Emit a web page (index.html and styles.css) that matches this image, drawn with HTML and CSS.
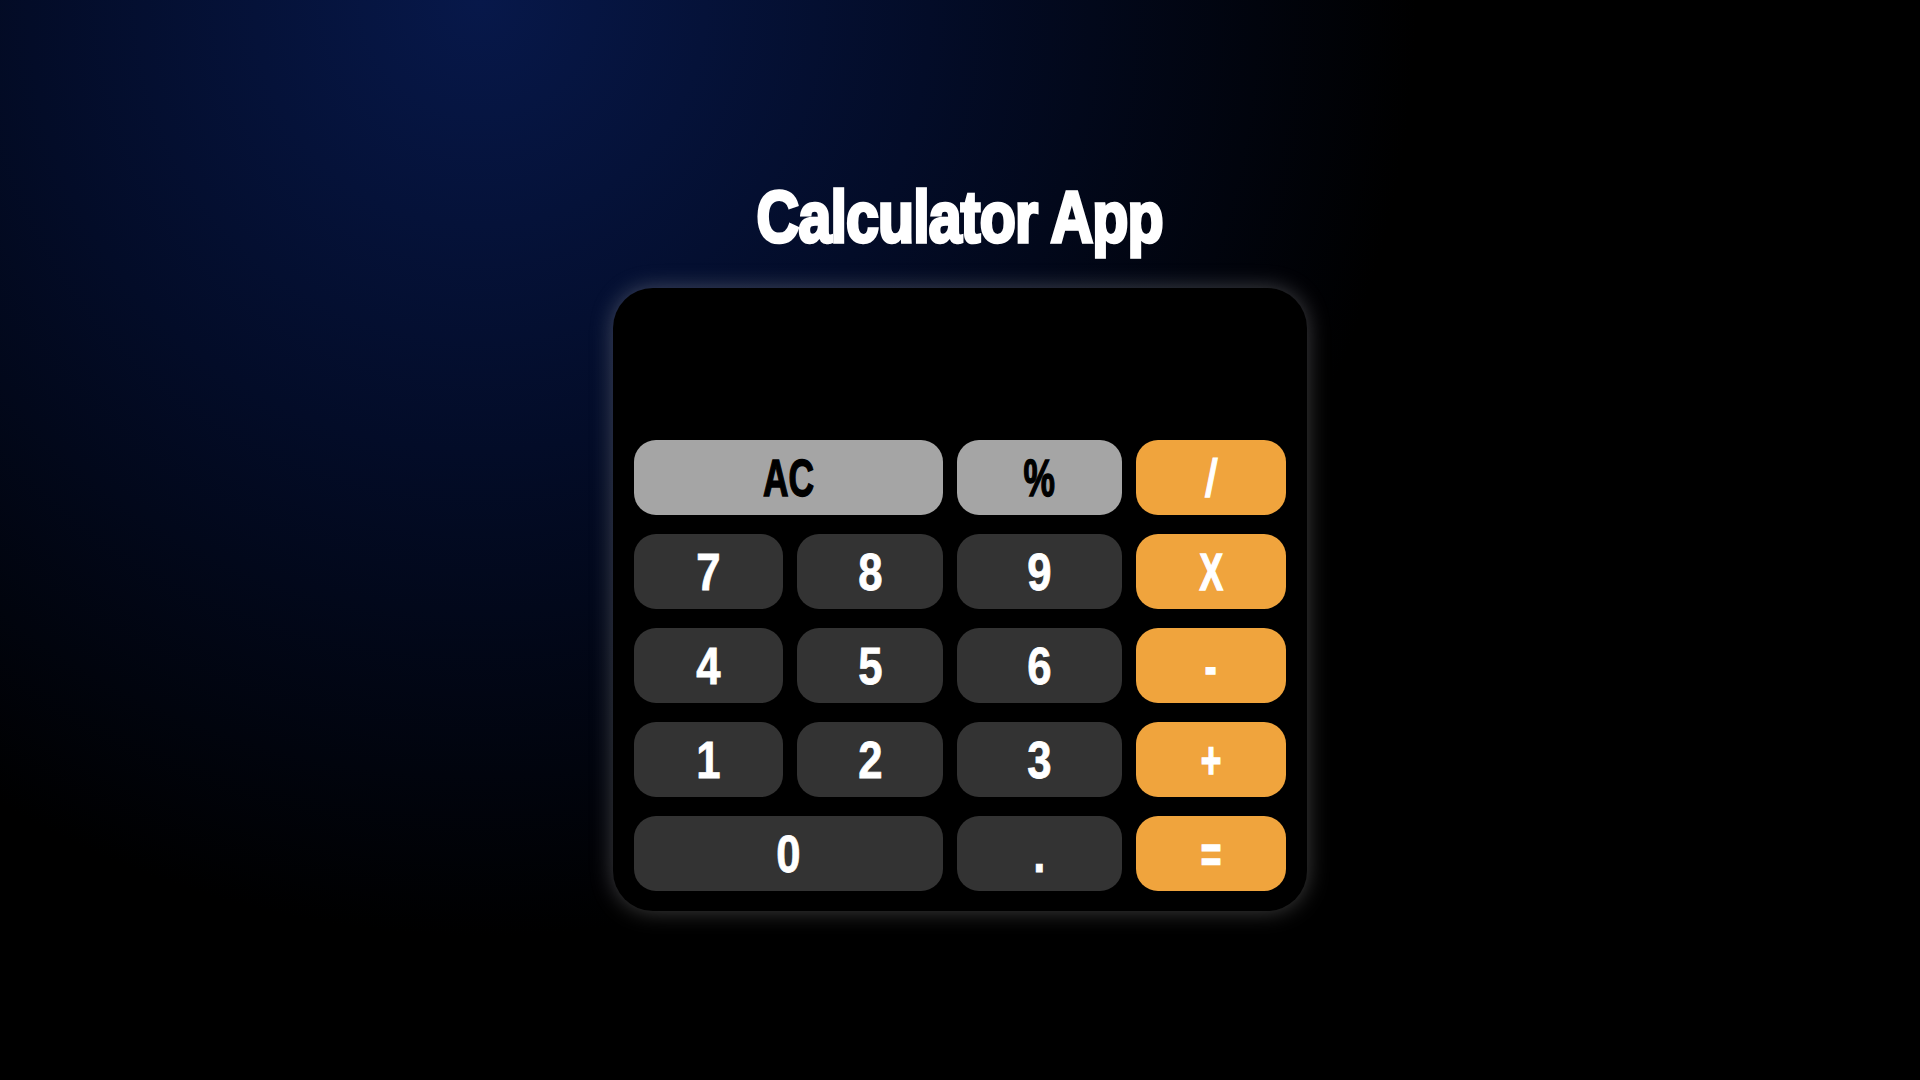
FILE: index.html
```html
<!DOCTYPE html>
<html lang="en">
<head>
<meta charset="utf-8">
<title>Calculator App</title>
<link rel="stylesheet" href="styles.css">
</head>
<body>
<main class="page">
  <h1 class="title">Calculator App</h1>
  <section class="calc">
    <div class="display"></div>
    <div class="keys">
      <button class="key key-fn key-wide"><span class="narrow">AC</span></button>
      <button class="key key-fn"><span class="narrow">%</span></button>
      <button class="key key-op"><span class="slash">/</span></button>
      <button class="key"><span class="digit">7</span></button>
      <button class="key"><span class="digit">8</span></button>
      <button class="key"><span class="digit">9</span></button>
      <button class="key key-op"><span class="narrow">X</span></button>
      <button class="key"><span class="digit">4</span></button>
      <button class="key"><span class="digit">5</span></button>
      <button class="key"><span class="digit">6</span></button>
      <button class="key key-op"><span class="narrow">-</span></button>
      <button class="key"><span class="digit">1</span></button>
      <button class="key"><span class="digit">2</span></button>
      <button class="key"><span class="digit">3</span></button>
      <button class="key key-op"><span class="narrow">+</span></button>
      <button class="key key-wide"><span class="digit">0</span></button>
      <button class="key"><span class="digit">.</span></button>
      <button class="key key-op"><span class="narrow">=</span></button>
    </div>
  </section>
</main>
</body>
</html>
```
FILE: styles.css
```css
html, body {
  margin: 0;
  height: 100%;
}
body {
  background: radial-gradient(circle farthest-corner at 25% 0%, #07184a 0%, #030c28 25%, #000 52%);
  background-color: #000;
  font-family: "Liberation Sans", Arial, sans-serif;
}
.page {
  min-height: 100vh;
  box-sizing: border-box;
  padding-top: 181px;
  display: flex;
  flex-direction: column;
  align-items: center;
}
.title {
  margin: 0;
  font-family: "Liberation Sans", Arial, sans-serif;
  font-weight: 700;
  font-size: 72px;
  line-height: 72px;
  color: #fff;
  -webkit-text-stroke: 3.5px #fff;
  letter-spacing: -1px;
  transform: scaleX(0.82);
  white-space: nowrap;
}
.calc {
  margin-top: 35px;
  width: 694px;
  box-sizing: border-box;
  padding: 20px 21px;
  background: #000;
  border-radius: 40px;
  box-shadow: 0 0 22px rgba(190, 190, 190, 0.35);
}
.display {
  height: 113px;
  margin-bottom: 19px;
}
.keys {
  display: grid;
  grid-template-columns: 149px 146px 165px 150px;
  grid-auto-rows: 75px;
  column-gap: 14px;
  row-gap: 19px;
}
.key {
  border: 0;
  margin: 0;
  padding: 0;
  border-radius: 22px;
  background: #333333;
  color: #fff;
  font-family: "Liberation Sans", Arial, sans-serif;
  font-weight: 700;
  font-size: 52px;
  line-height: 1;
  display: flex;
  align-items: center;
  justify-content: center;
}
.key span {
  display: inline-block;
}
.narrow {
  transform: scaleX(0.68);
  -webkit-text-stroke: 1.5px currentColor;
}
.digit {
  transform: scaleX(0.84);
  -webkit-text-stroke: 0.8px currentColor;
}
.slash {
  transform: skewX(-4deg) scaleX(0.7);
  -webkit-text-stroke: 1.5px currentColor;
}
.key-wide {
  grid-column: span 2;
}
.key-fn {
  background: #a5a5a5;
  color: #000;
}
.key-op {
  background: #f0a43d;
  color: #fff;
}
```
